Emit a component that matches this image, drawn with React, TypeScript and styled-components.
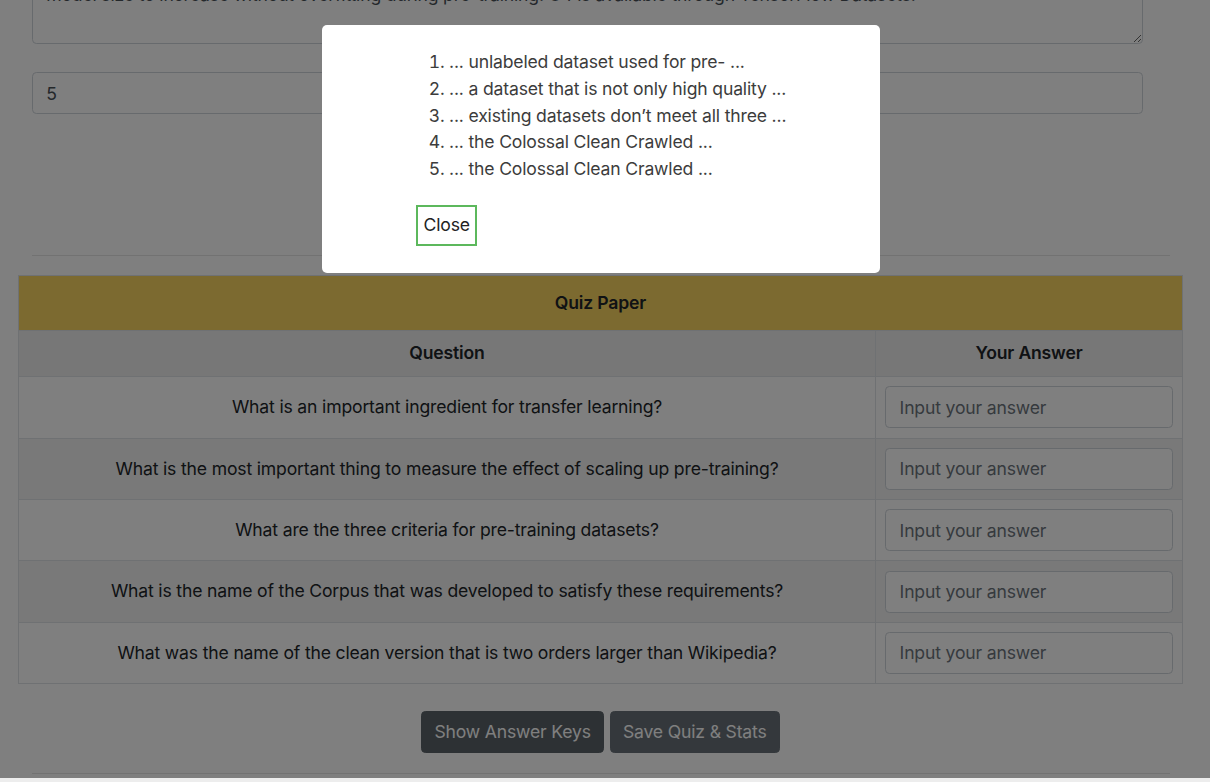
import React from "react";
import styled, { createGlobalStyle } from "styled-components";

const GlobalStyle = createGlobalStyle`
  html, body {
    margin: 0;
    padding: 0;
    background: #ededed;
    overflow: hidden;
  }
  * { box-sizing: border-box; }
  body {
    font-family: Inter, "Liberation Sans", Arial, sans-serif;
    font-size: 17.6px;
    line-height: 26.4px;
    letter-spacing: -0.17px;
    color: #212529;
  }
`;

const Page = styled.div`
  background: #ffffff;
  height: 778px;
  overflow: hidden;
  display: flex;
  flex-direction: column;
`;

const FieldBlock = styled.div`
  margin-left: 32px;
  width: 1111px;
  display: flex;
  flex-direction: column;
`;

const TextArea = styled.textarea`
  margin-top: -52px;
  height: 96px;
  width: 100%;
  padding: 6.6px 13.2px;
  font: inherit;
  letter-spacing: inherit;
  color: #495057;
  border: 1px solid #ced4da;
  border-radius: 4.4px;
  background: #fff;
  white-space: pre;
  overflow: hidden;
  resize: vertical;
`;

const NumberInput = styled.input`
  margin-top: 28px;
  height: 42px;
  width: 100%;
  padding: 6.6px 13.2px;
  font: inherit;
  color: #495057;
  border: 1px solid #ced4da;
  border-radius: 4.4px;
  background: #fff;
`;

const Rule = styled.hr<{ $top: number }>`
  margin: ${(p) => p.$top}px 0 0 32px;
  width: 1138px;
  border: 0;
  border-top: 1px solid rgba(0, 0, 0, 0.1);
  height: 0;
`;

const Table = styled.table`
  margin: 19px 0 0 18px;
  width: 1165px;
  border-collapse: collapse;
  border: 1px solid #dee2e6;
`;

const TitleCell = styled.th`
  background: #f8d460;
  padding: 13.8px 9.4px;
  font-weight: 600;
  text-align: center;
  border: 1px solid #dee2e6;
`;

const HeadCell = styled.th<{ $w?: number }>`
  background: #efefef;
  padding: 9.4px;
  font-weight: 600;
  text-align: center;
  border: 1px solid #dee2e6;
  width: ${(p) => (p.$w ? `${p.$w}px` : "auto")};
`;

const Row = styled.tr<{ $shaded: boolean }>`
  background: ${(p) => (p.$shaded ? "#f2f2f2" : "#ffffff")};
`;

const Cell = styled.td`
  padding: 9.2px 9.4px;
  height: 61.4px;
  text-align: center;
  vertical-align: middle;
  border: 1px solid #dee2e6;
`;

const AnswerInput = styled.input`
  display: block;
  width: 100%;
  height: 42px;
  padding: 6.6px 13.2px;
  font: inherit;
  letter-spacing: inherit;
  color: #495057;
  border: 1px solid #ced4da;
  border-radius: 4.4px;
  background: #fff;
  &::placeholder {
    color: #6c757d;
  }
`;

const ButtonBar = styled.div`
  margin: 27px 0 0 18px;
  width: 1165px;
  display: flex;
  justify-content: center;
  gap: 6px;
`;

const ActionButton = styled.button<{ $tone: string }>`
  height: 42px;
  padding: 6.6px 12px;
  font: inherit;
  letter-spacing: inherit;
  color: #ffffff;
  background: ${(p) => p.$tone};
  border: 1px solid ${(p) => p.$tone};
  border-radius: 4.4px;
`;

const Overlay = styled.div`
  position: fixed;
  top: 0;
  left: 0;
  right: 0;
  bottom: 4px;
  background: rgba(0, 0, 0, 0.5);
  display: flex;
  align-items: flex-start;
  padding: 25px 0 0 322px;
`;

const Modal = styled.div`
  width: 558px;
  background: #ffffff;
  border-radius: 5px;
  padding: 24px 0 27px 94px;
  display: flex;
  flex-direction: column;
  align-items: flex-start;
`;

const KeyList = styled.ol`
  margin: 0;
  padding-left: 33px;
  color: #3c3c3c;
  line-height: 26.8px;
`;

const CloseButton = styled.button`
  margin-top: 22px;
  height: 41px;
  padding: 5px 5.5px;
  font: inherit;
  letter-spacing: inherit;
  color: #222;
  background: #fff;
  border: 2px solid #5cb85c;
  border-radius: 0;
`;

const questions = [
  "What is an important ingredient for transfer learning?",
  "What is the most important thing to measure the effect of scaling up pre-training?",
  "What are the three criteria for pre-training datasets?",
  "What is the name of the Corpus that was developed to satisfy these requirements?",
  "What was the name of the clean version that is two orders larger than Wikipedia?",
];

const keys = [
  "... unlabeled dataset used for pre- ...",
  "... a dataset that is not only high quality ...",
  "... existing datasets don\u2019t meet all three ...",
  "... the Colossal Clean Crawled ...",
  "... the Colossal Clean Crawled ...",
];

const passage =
  "The Colossal Clean Crawled Corpus is two orders of magnitude larger than Wikipedia, which allows the\nmodel size to increase without overfitting during pre-training. C4 is available through TensorFlow Datasets.";

export default function App() {
  return (
    <>
      <GlobalStyle />
      <Page>
        <FieldBlock>
          <TextArea readOnly spellCheck={false} defaultValue={passage} />
          <NumberInput type="text" readOnly spellCheck={false} defaultValue="5" />
        </FieldBlock>
        <Rule $top={141} />
        <Table>
          <tbody>
            <tr>
              <TitleCell colSpan={2}>Quiz Paper</TitleCell>
            </tr>
            <tr>
              <HeadCell>Question</HeadCell>
              <HeadCell $w={307}>Your Answer</HeadCell>
            </tr>
            {questions.map((q, i) => (
              <Row key={q} $shaded={i % 2 === 1}>
                <Cell>{q}</Cell>
                <Cell>
                  <AnswerInput placeholder="Input your answer" spellCheck={false} />
                </Cell>
              </Row>
            ))}
          </tbody>
        </Table>
        <ButtonBar>
          <ActionButton $tone="#5a6268">Show Answer Keys</ActionButton>
          <ActionButton $tone="#687178">Save Quiz &amp; Stats</ActionButton>
        </ButtonBar>
        <Rule $top={20} />
      </Page>
      <Overlay>
        <Modal>
          <KeyList>
            {keys.map((k, i) => (
              <li key={i}>{k}</li>
            ))}
          </KeyList>
          <CloseButton>Close</CloseButton>
        </Modal>
      </Overlay>
    </>
  );
}
